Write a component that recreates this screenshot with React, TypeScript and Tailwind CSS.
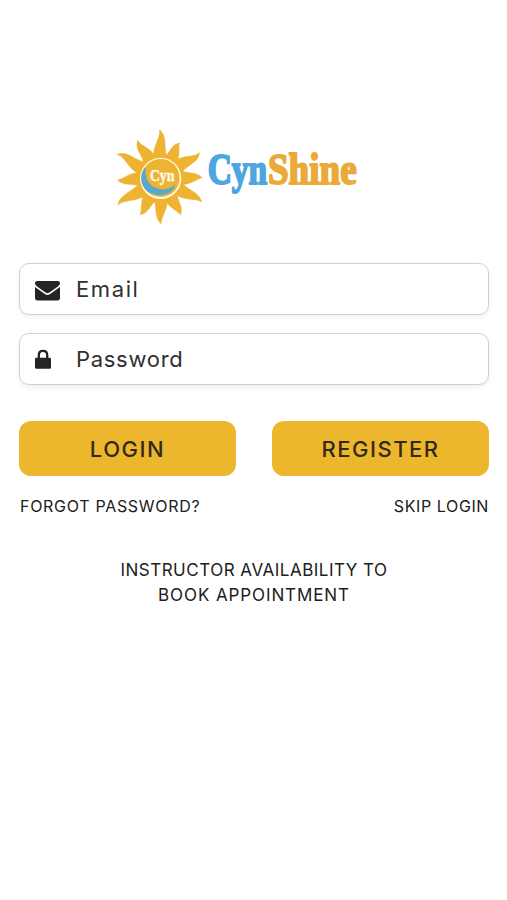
import { useState } from 'react';
import type { ReactNode } from 'react';

const CENTER = { x: 152, y: 175 };

// Tip of each flame, with the sideways bend of its body
const FLAMES = [
  { x: 149, y: 30, bend: 12 },
  { x: 209, y: 69, bend: -11 },
  { x: 268, y: 98, bend: 13 },
  { x: 276, y: 173, bend: -9 },
  { x: 275, y: 246, bend: -14 },
  { x: 212, y: 284, bend: -9 },
  { x: 153, y: 311, bend: 8 },
  { x: 91, y: 284, bend: -9 },
  { x: 24, y: 254, bend: 12 },
  { x: 23, y: 180, bend: -10 },
  { x: 22, y: 103, bend: 14 },
  { x: 83, y: 61, bend: -14 },
];

function flamePath(tip: { x: number; y: number; bend: number }) {
  const dx = tip.x - CENTER.x;
  const dy = tip.y - CENTER.y;
  const length = Math.hypot(dx, dy);
  const point = (along: number, side: number) => {
    const x = CENTER.x + (dx * along - dy * side) / length;
    const y = CENTER.y + (dy * along + dx * side) / length;
    return `${x.toFixed(1)} ${y.toFixed(1)}`;
  };
  const body = length - 68;
  const near = 68 + body * 0.45;
  const far = 68 + body * 0.66;
  const sway = tip.bend * -0.45;

  return [
    `M${point(62, -20)}`,
    `C${point(near, -15 + sway)} ${point(far, -9 + tip.bend)} ${point(length, 0)}`,
    `C${point(far + 4, 11 + tip.bend)} ${point(near, 15 + sway)} ${point(62, 20)}Z`,
  ].join('');
}

function Logo() {
  return (
    <svg
      className="ml-[110px] block h-[110px] w-[255px]"
      viewBox="0 0 765 330"
      role="img"
      aria-label="CynShine"
    >
      <g fill="#edb331" stroke="#edb331" strokeWidth="2" strokeLinejoin="round">
        {FLAMES.map((tip) => (
          <path key={`${tip.x}-${tip.y}`} d={flamePath(tip)} />
        ))}
      </g>
      <circle cx="152" cy="175" r="69" fill="#edb331" />
      <circle cx="152" cy="175" r="62" fill="#fff7e0" />
      <circle cx="152" cy="174" r="57" fill="#edb331" />
      <path
        d="M107 140C80 170 94 225 151 225C179 225 194 208 197 191C184 206 168 211 149 207C117 201 102 175 107 140Z"
        fill="#55a8cf"
      />
      <text
        transform="translate(119 182) scale(.84 1)"
        fill="#fff9e8"
        stroke="#fff9e8"
        strokeWidth="1.5"
        fontSize="50"
        fontWeight="700"
        fontFamily="'Liberation Serif', serif"
      >
        Cyn
      </text>
      <g
        fontSize="134"
        fontWeight="700"
        fontFamily="'Liberation Serif', serif"
        strokeWidth="6"
        strokeLinejoin="round"
      >
        <text
          transform="translate(293 193) scale(.75 1)"
          fill="#4da6df"
          stroke="#4da6df"
        >
          Cyn
        </text>
        <text
          transform="translate(474 193) scale(.83 1)"
          fill="#ebaa37"
          stroke="#ebaa37"
        >
          Shine
        </text>
      </g>
    </svg>
  );
}

function MailIcon() {
  return (
    <svg className="h-5 w-[25px]" viewBox="0 0 25 20" fill="#242424">
      <path d="M2.2 0H22.8C24.1 0 25 .9 25 2.1C25 3.5 24 4.7 22.9 5.5L15.2 11C14.3 11.6 13.4 12.2 12.5 12.2C11.6 12.2 10.7 11.6 9.8 11L2.1 5.5C1 4.7 0 3.5 0 2.3C0 1 .9 0 2.2 0Z" />
      <path d="M0 5.7C.4 6.2 .9 6.6 1.4 6.9L8.8 12.2C9.9 13 11.2 13.9 12.5 13.9C13.8 13.9 15.1 13 16.2 12.2L23.6 6.9C24.1 6.6 24.6 6.2 25 5.7V17.1C25 18.5 24 19.5 22.8 19.5H2.2C1 19.5 0 18.5 0 17.1Z" />
    </svg>
  );
}

function LockIcon() {
  return (
    <svg className="-mt-[3px] h-5 w-4" viewBox="0 0 16 20" fill="#242424">
      <path d="M3.8 10V6.2C3.8 3.7 5.4 1.9 8 1.9S12.2 3.7 12.2 6.2V10" fill="none" stroke="#242424" strokeWidth="2.3" />
      <rect y="8.7" width="16" height="11.1" rx="1.4" />
    </svg>
  );
}

type FieldProps = {
  type: string;
  label: string;
  value: string;
  onChange: (value: string) => void;
  icon: ReactNode;
  className: string;
};

function Field({ type, label, value, onChange, icon, className }: FieldProps) {
  return (
    <label className="flex h-[52px] items-center rounded-[10px] border border-[#d0d0d0] bg-white pl-[15px] shadow-[0_3px_5px_rgba(0,0,0,0.06)]">
      <span className="w-[41px] shrink-0 pt-[3px]">{icon}</span>
      <input
        type={type}
        aria-label={label}
        placeholder={label}
        value={value}
        onChange={(e) => onChange(e.target.value)}
        className={`min-w-0 flex-1 bg-transparent text-[22px] text-[#303030] outline-none placeholder:text-[#303030] ${className}`}
      />
    </label>
  );
}

export default function App() {
  const [email, setEmail] = useState('');
  const [password, setPassword] = useState('');

  return (
    <main className="min-h-[900px] w-full bg-white pt-[120px] font-['Inter',sans-serif] text-[#202020]">
      <Logo />

      <form
        className="mt-[33px] pr-[18px] pl-[19px]"
        onSubmit={(e) => e.preventDefault()}
      >
        <div className="space-y-[18px]">
          <Field
            type="email"
            label="Email"
            value={email}
            onChange={setEmail}
            icon={<MailIcon />}
            className="tracking-[1.6px]"
          />
          <Field
            type="password"
            label="Password"
            value={password}
            onChange={setPassword}
            icon={<LockIcon />}
            className="tracking-[0.7px]"
          />
        </div>

        <div className="mt-9 grid grid-cols-2 gap-9">
          <button
            type="submit"
            className="h-[55px] rounded-xl bg-[#edb72d] pt-px text-[22px] font-medium tracking-[1.5px] text-[#302a18]"
          >
            LOGIN
          </button>
          <button
            type="button"
            className="h-[55px] rounded-xl bg-[#edb72d] pt-px text-[22px] font-medium tracking-[1.5px] text-[#302a18]"
          >
            REGISTER
          </button>
        </div>

        <div className="mt-[18px] flex justify-between text-base leading-6">
          <button type="button" className="pl-px tracking-[0.7px]">
            FORGOT PASSWORD?
          </button>
          <button type="button" className="tracking-[0.6px]">
            SKIP LOGIN
          </button>
        </div>
      </form>

      <p className="mt-10 pl-px text-center text-[17px] leading-[25px] tracking-[0.5px]">
        INSTRUCTOR AVAILABILITY TO
        <br />
        <span className="tracking-[0.9px]">BOOK APPOINTMENT</span>
      </p>
    </main>
  );
}
